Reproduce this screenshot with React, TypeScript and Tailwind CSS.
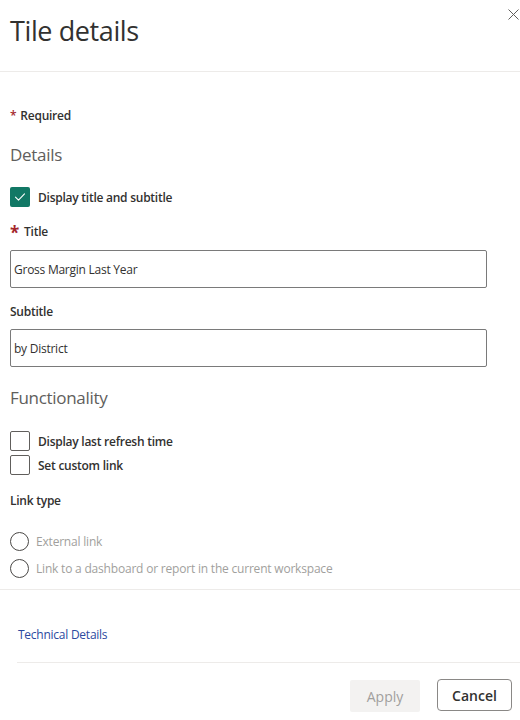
import React from 'react';

const font = { fontFamily: '"Open Sans", "Noto Sans", Arial, sans-serif' };

interface CheckRowProps {
  label: string;
  checked?: boolean;
  className?: string;
}

const CheckRow: React.FC<CheckRowProps> = ({ label, checked = false, className = '' }) => (
  <div className={`flex items-center h-[20px] ${className}`}>
    {checked ? (
      <div className="w-[20px] h-[20px] rounded-[2px] bg-[#117865] flex items-center justify-center">
        <svg width="14" height="14" viewBox="0 0 14 14" fill="none">
          <path d="M2.5 7.2l3 3 6-6.4" stroke="#ffffff" strokeWidth="1.1" strokeLinecap="round" strokeLinejoin="round" />
        </svg>
      </div>
    ) : (
      <div className="w-[20px] h-[20px] rounded-[2px] border border-[#605e5c] bg-white" />
    )}
    <span className="ml-[8px] pt-[1px] text-[12px] font-semibold text-[#323130] tracking-[-0.25px]">{label}</span>
  </div>
);

const RadioRow: React.FC<{ label: string; className?: string }> = ({ label, className = '' }) => (
  <div className={`flex items-center h-[20px] ${className}`}>
    <div className="w-[19px] h-[19px] rounded-full border border-[#4a4846] bg-white" />
    <span className="ml-[7px] pt-[1px] text-[12px] text-[#a19f9d] tracking-[-0.2px]">{label}</span>
  </div>
);

const App: React.FC = () => {
  return (
    <div className="w-[520px] h-[720px] overflow-hidden bg-white text-[#323130]" style={font}>
      {/* header */}
      <div className="h-[72px] border-b border-[#edebe9] flex items-start justify-between">
        <h1 className="pl-[10px] pt-[13px] text-[27px] leading-[36px] font-normal text-[#323130] tracking-[-0.4px]">
          Tile details
        </h1>
        <button className="mt-[9px] mr-[1px] w-[11px] h-[11px] flex items-center justify-center text-[#605e5c]">
          <svg width="11" height="11" viewBox="0 0 11 11" fill="none">
            <path d="M0.5 0.5l10 10M10.5 0.5l-10 10" stroke="currentColor" strokeWidth="1" />
          </svg>
        </button>
      </div>

      {/* body */}
      <div className="px-[10px] flex flex-col">
        <div className="mt-[34px] h-[20px] flex items-center text-[12px] font-semibold tracking-[-0.25px]">
          <span className="text-[#a4262c] mr-[4px]">*</span>
          <span>Required</span>
        </div>

        <div className="mt-[17px] h-[24px] flex items-center text-[17px] text-[#605e5c] tracking-[-0.3px]">Details</div>

        <CheckRow label="Display title and subtitle" checked className="mt-[20px]" />

        <div className="mt-[14px] h-[20px] flex items-center text-[12px] font-semibold tracking-[-0.25px]">
          <span className="text-[#a4262c] text-[17px] font-bold mr-[5px] leading-none mt-[2px]">*</span>
          <span className="pt-[1px]">Title</span>
        </div>
        <div className="mt-[9px] w-[477px] h-[38px] border border-[#7a7a7a] rounded-[2px] flex items-center px-[3px] pt-[1px] text-[12px] tracking-[-0.25px]">
          Gross Margin Last Year
        </div>

        <div className="mt-[13px] h-[20px] flex items-center pt-[1px] text-[12px] font-semibold tracking-[-0.25px]">Subtitle</div>
        <div className="mt-[8px] w-[477px] h-[38px] border border-[#7a7a7a] rounded-[2px] flex items-center px-[3px] pt-[1px] text-[12px] tracking-[-0.25px]">
          by District
        </div>

        <div className="mt-[19px] h-[24px] flex items-center text-[17px] text-[#605e5c] tracking-[-0.3px]">Functionality</div>

        <CheckRow label="Display last refresh time" className="mt-[21px]" />
        <CheckRow label="Set custom link" className="mt-[4px]" />

        <div className="mt-[15px] h-[20px] flex items-center pt-[1px] text-[12px] font-semibold tracking-[-0.25px]">Link type</div>

        <RadioRow label="External link" className="mt-[21px]" />
        <RadioRow label="Link to a dashboard or report in the current workspace" className="mt-[7px]" />
      </div>

      <div className="mt-[11px] border-t border-[#edebe9]" />

      {/* footer */}
      <div className="mt-[35px] h-[20px] pl-[18px] flex items-center">
        <a className="text-[12px] text-[#2b4aa0] tracking-[-0.25px] cursor-pointer">Technical Details</a>
      </div>
      <div className="mt-[17px] ml-[17px] border-t border-[#edebe9]" />
      <div className="mt-[16px] flex justify-end items-start pr-[8px] gap-[17px]">
        <button className="mt-[1px] w-[70px] h-[32px] bg-[#f3f2f1] text-[14px] text-[#a19f9d] rounded-[2px]">Apply</button>
        <button className="w-[75px] h-[32px] border border-[#8a8886] rounded-[4px] text-[14px] font-semibold text-[#323130]">
          Cancel
        </button>
      </div>
    </div>
  );
};

export default App;
